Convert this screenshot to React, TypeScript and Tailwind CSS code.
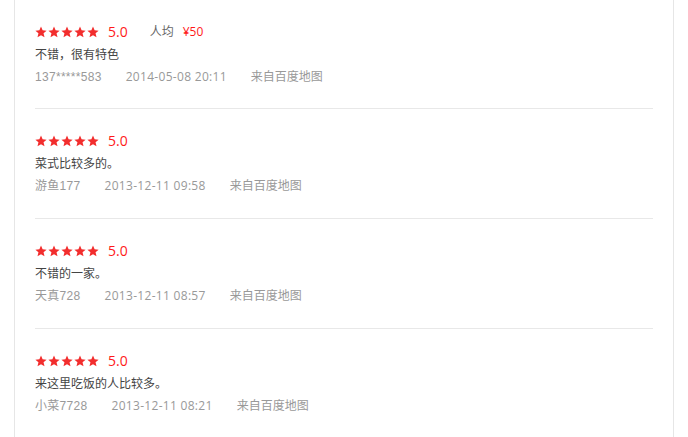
const reviews = [
  { text: "不错，很有特色", user: "137*****583", time: "2014-05-08 20:11", price: "¥50" },
  { text: "菜式比较多的。", user: "游鱼177", time: "2013-12-11 09:58" },
  { text: "不错的一家。", user: "天真728", time: "2013-12-11 08:57" },
  { text: "来这里吃饭的人比较多。", user: "小菜7728", time: "2013-12-11 08:21" },
]

function Star() {
  return (
    <svg width="12" height="12" viewBox="0 0 24 24" className="block">
      <path d="M12 1.2l3.2 7.4 8 .7-6.1 5.3 1.9 7.9L12 18.3l-7 4.2 1.9-7.9L.8 9.3l8-.7z" fill="#f22d2d" />
    </svg>
  )
}

export default function App() {
  return (
    <div className="bg-white w-[688px] h-[437px] overflow-hidden" style={{ fontFamily: '"Open Sans", "Noto Sans CJK SC", sans-serif' }}>
      <div className="ml-[14px] w-[660px] h-full border-x border-[#e6e6e6] px-[20px]">
        {reviews.map((r, i) => (
          <div key={i} className={`pt-[22px] border-b border-[#e8e8e8] ${i === 0 ? "pb-[20px]" : "pb-[21px]"}`}>
            <div className="flex items-center h-[20px]">
              <div className="flex gap-[1px]">
                {[0, 1, 2, 3, 4].map((s) => (
                  <Star key={s} />
                ))}
              </div>
              <span className="ml-[9px] text-[14px] text-[#ff1a1a] leading-[20px]">5.0</span>
              {r.price && (
                <>
                  <span className="ml-[22px] text-[12px] text-[#666] leading-[20px]">人均</span>
                  <span className="ml-[9px] text-[12px] text-[#ff1a1a] leading-[20px]">{r.price}</span>
                </>
              )}
            </div>
            <div className="mt-[2px] h-[22px] leading-[22px] text-[12px] text-[#444]">{r.text}</div>
            <div className="h-[22px] leading-[22px] text-[12px] text-[#999] flex gap-[24px]">
              <span className="tracking-[0.3px] font-['Liberation_Sans','Noto_Sans_CJK_SC',sans-serif]">{r.user}</span>
              <span className="tracking-[0.3px]">{r.time}</span>
              <span>来自百度地图</span>
            </div>
          </div>
        ))}
      </div>
    </div>
  )
}
